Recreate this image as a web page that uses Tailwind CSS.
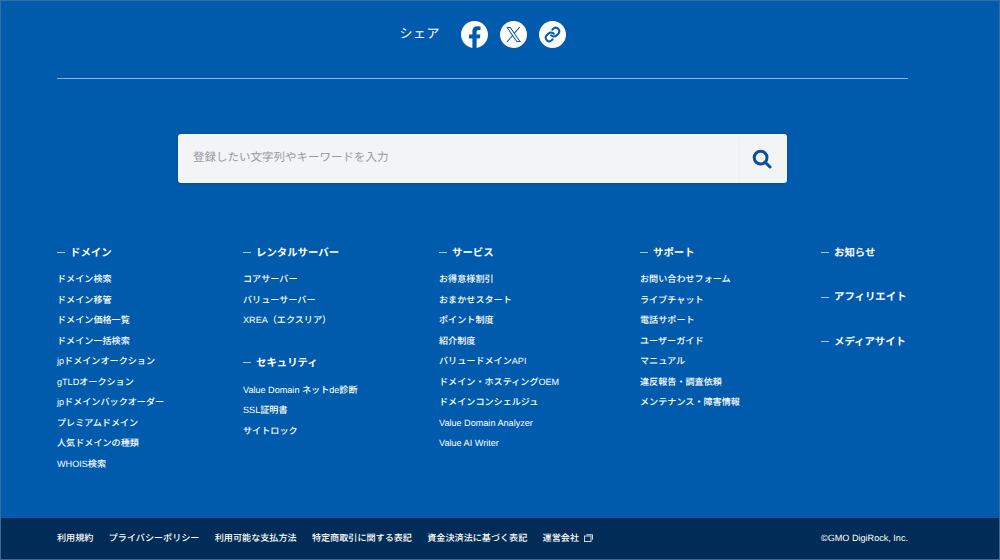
<!DOCTYPE html>
<html lang="ja">
  <head>
    <meta charset="UTF-8" />
    <script src="https://cdn.jsdelivr.net/npm/@tailwindcss/browser@4"></script>
    <title>Footer</title>
  </head>
  <body class="bg-[#005bac] font-['Liberation_Sans','Noto_Sans_CJK_JP',sans-serif] text-white [text-rendering:geometricPrecision]">
    <div class="w-[1000px] h-[560px] overflow-hidden flex flex-col border border-[#3a6a9c]">
      <main class="flex-1 pl-[56px] pr-[91px]">
        <!-- share -->
        <div class="h-[78px] flex items-start justify-center border-b border-[#8fb4d9]">
          <div class="flex items-center pt-[20px]">
            <span class="text-[13px] leading-[26px] tracking-[0.5px] w-[61px] -mt-[2px]">シェア</span>
            <div class="flex items-center gap-[12px]">
              <svg class="w-[27px] h-[27px]" viewBox="0 0 24 24" aria-label="Facebook"><path fill="#fff" d="M24 12.07C24 5.4 18.63 0 12 0S0 5.4 0 12.07c0 6.03 4.39 11.02 10.13 11.93v-8.44H7.08v-3.49h3.05V9.41c0-3.02 1.79-4.69 4.53-4.69 1.31 0 2.69.24 2.69.24v2.97h-1.52c-1.49 0-1.95.93-1.95 1.89v2.25h3.33l-.53 3.49h-2.8V24C19.61 23.09 24 18.1 24 12.07z"/></svg>
              <span class="w-[27px] h-[27px] rounded-full bg-white flex items-center justify-center">
                <svg class="w-[15px] h-[15px]" viewBox="0 0 24 24" aria-label="X"><path fill="#005bac" d="M14.2 10.2 22.9 0h-2.1l-7.5 8.8L7.3 0H.4l9.1 13.4L.4 24h2.1l8-9.3 6.4 9.3h6.9L14.2 10.2zM3.2 1.6h3.2l14.5 20.8h-3.2L3.2 1.6z"/></svg>
              </span>
              <span class="w-[27px] h-[27px] rounded-full bg-white flex items-center justify-center">
                <svg class="w-[17px] h-[17px]" viewBox="0 0 24 24" fill="none" stroke="#005bac" stroke-width="2.8" stroke-linecap="round" stroke-linejoin="round" aria-label="Link"><path d="M10 13a5 5 0 0 0 7.5.5l3-3a5 5 0 0 0-7-7l-1.7 1.7"/><path d="M14 11a5 5 0 0 0-7.5-.5l-3 3a5 5 0 0 0 7 7l1.7-1.7"/></svg>
              </span>
            </div>
          </div>
        </div>
        <!-- search -->
        <div class="mt-[55px] w-[609px] h-[49px] ml-[121px] flex bg-[#f3f4f6] rounded-[3px] shadow-sm">
          <div class="flex-1 flex items-center pl-[15px] pt-[1px] text-[11.5px] text-[#9a9a9a]">登録したい文字列やキーワードを入力</div>
          <button class="w-[48px] flex items-center justify-center border-l border-[#eeeff1] pr-[3px]" aria-label="検索">
            <svg class="w-[20px] h-[20px]" viewBox="0 0 20 20" fill="none" stroke="#0a4f9e" stroke-width="3" stroke-linecap="round"><circle cx="8.6" cy="8.6" r="6.4"/><path d="m13.5 13.5 4.5 4.5"/></svg>
          </button>
        </div>
        <!-- link columns -->
        <div class="flex mt-[63.5px]">
          <div class="w-[186px]">
            <h3 class="flex items-center gap-[5px] text-[10.4px] leading-[14px] font-bold"><span class="w-[8px] h-px bg-[#a9c6e3] -translate-y-[1px]"></span>ドメイン</h3>
            <ul class="mt-[8.5px] text-[9.1px] leading-[20.5px] font-medium">
              <li>ドメイン検索</li>
              <li>ドメイン移管</li>
              <li>ドメイン価格一覧</li>
              <li>ドメイン一括検索</li>
              <li>jpドメインオークション</li>
              <li>gTLDオークション</li>
              <li>jpドメインバックオーダー</li>
              <li>プレミアムドメイン</li>
              <li>人気ドメインの種類</li>
              <li>WHOIS検索</li>
            </ul>
          </div>
          <div class="w-[196px]">
            <h3 class="flex items-center gap-[5px] text-[10.4px] leading-[14px] font-bold"><span class="w-[8px] h-px bg-[#a9c6e3] -translate-y-[1px]"></span>レンタルサーバー</h3>
            <ul class="mt-[8.5px] text-[9.1px] leading-[20.5px] font-medium">
              <li>コアサーバー</li>
              <li>バリューサーバー</li>
              <li>XREA（エクスリア）</li>
            </ul>
            <h3 class="mt-[26px] flex items-center gap-[5px] text-[10.4px] leading-[14px] font-bold"><span class="w-[8px] h-px bg-[#a9c6e3] -translate-y-[1px]"></span>セキュリティ</h3>
            <ul class="mt-[9px] text-[9.1px] leading-[20.5px] font-medium">
              <li>Value Domain ネットde診断</li>
              <li>SSL証明書</li>
              <li>サイトロック</li>
            </ul>
          </div>
          <div class="w-[201px]">
            <h3 class="flex items-center gap-[5px] text-[10.4px] leading-[14px] font-bold"><span class="w-[8px] h-px bg-[#a9c6e3] -translate-y-[1px]"></span>サービス</h3>
            <ul class="mt-[8.5px] text-[9.1px] leading-[20.5px] font-medium">
              <li>お得意様割引</li>
              <li>おまかせスタート</li>
              <li>ポイント制度</li>
              <li>紹介制度</li>
              <li>バリュードメインAPI</li>
              <li>ドメイン・ホスティングOEM</li>
              <li>ドメインコンシェルジュ</li>
              <li>Value Domain Analyzer</li>
              <li>Value AI Writer</li>
            </ul>
          </div>
          <div class="w-[181px]">
            <h3 class="flex items-center gap-[5px] text-[10.4px] leading-[14px] font-bold"><span class="w-[8px] h-px bg-[#a9c6e3] -translate-y-[1px]"></span>サポート</h3>
            <ul class="mt-[8.5px] text-[9.1px] leading-[20.5px] font-medium">
              <li>お問い合わせフォーム</li>
              <li>ライブチャット</li>
              <li>電話サポート</li>
              <li>ユーザーガイド</li>
              <li>マニュアル</li>
              <li>違反報告・調査依頼</li>
              <li>メンテナンス・障害情報</li>
            </ul>
          </div>
          <div class="flex flex-col gap-[30.5px]">
            <h3 class="flex items-center gap-[5px] text-[10.4px] leading-[14px] font-bold"><span class="w-[8px] h-px bg-[#a9c6e3] -translate-y-[1px]"></span>お知らせ</h3>
            <h3 class="flex items-center gap-[5px] text-[10.4px] leading-[14px] font-bold"><span class="w-[8px] h-px bg-[#a9c6e3] -translate-y-[1px]"></span>アフィリエイト</h3>
            <h3 class="flex items-center gap-[5px] text-[10.4px] leading-[14px] font-bold"><span class="w-[8px] h-px bg-[#a9c6e3] -translate-y-[1px]"></span>メディアサイト</h3>
          </div>
        </div>
      </main>
      <!-- bottom bar -->
      <footer class="h-[41px] bg-[#002c57] pl-[56px] pr-[91px] flex items-center justify-between text-[9.1px] font-medium">
        <ul class="flex gap-[15.3px]">
          <li>利用規約</li>
          <li>プライバシーポリシー</li>
          <li>利用可能な支払方法</li>
          <li>特定商取引に関する表記</li>
          <li>資金決済法に基づく表記</li>
          <li class="flex items-center gap-[5px]">運営会社
            <svg class="w-[9px] h-[8px]" viewBox="0 0 9 8" fill="none" stroke="#cfd9e4" stroke-width="1"><rect x="0.5" y="2" width="6.5" height="5.5"/><path d="M2.5 0.7h6v5"/></svg>
          </li>
        </ul>
        <span>©GMO DigiRock, Inc.</span>
      </footer>
    </div>
  </body>
</html>
